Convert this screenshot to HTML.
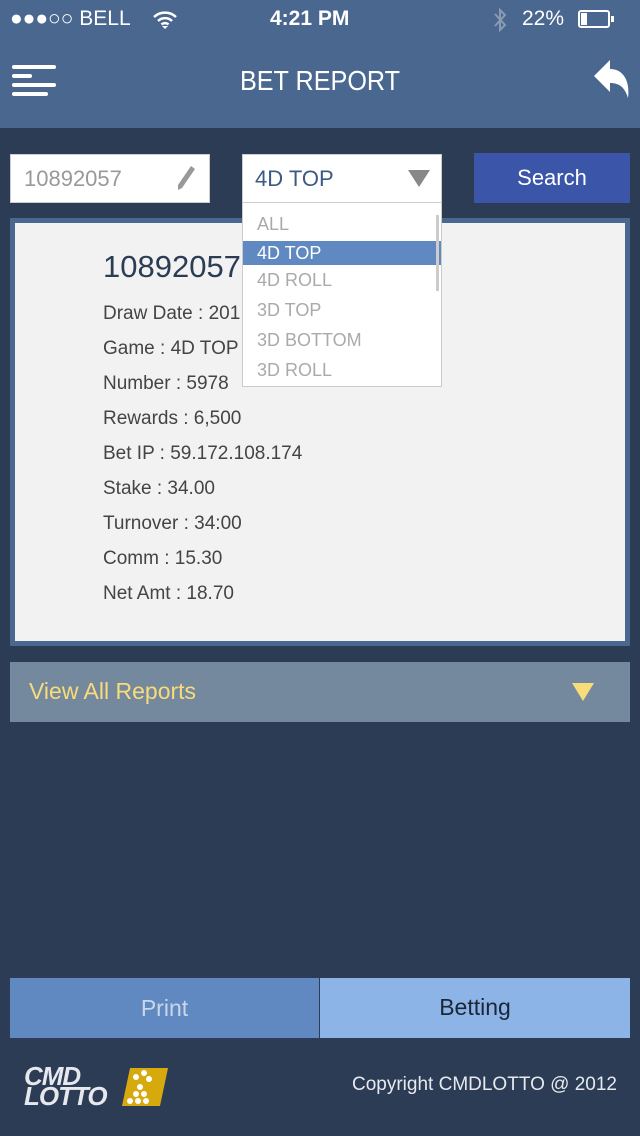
<!DOCTYPE html>
<html><head><meta charset="utf-8"><style>
*{margin:0;padding:0;box-sizing:border-box}
body{width:640px;height:1136px;background:#2b3c54;font-family:"Liberation Sans",sans-serif;position:relative;overflow:hidden}
.a{position:absolute}
#hdr{left:0;top:0;width:640px;height:128px;background:#4a6790}
.t{color:#fff;white-space:nowrap}
.card .l{position:absolute;left:88px;font-size:19px;color:#444;}
.dd div{height:30px;line-height:30px;padding-left:14px;font-size:18px;color:#aaa}
</style></head><body>
<div id="hdr" class="a"></div>
<div class="a t" style="left:10px;top:7px;font-size:21px">●●●○○ BELL</div>
<svg class="a" style="left:152px;top:9px" width="26" height="22" viewBox="0 0 26 22"><path d="M2 8 A16 16 0 0 1 24 8 M6 12 A10 10 0 0 1 20 12 M9.5 15.5 A5 5 0 0 1 16.5 15.5" stroke="#fff" stroke-width="2.5" fill="none"/><path d="M10 17 L13 20 L16 17 Z" fill="#fff"/></svg>
<div class="a t" style="left:270px;top:7px;font-size:21px;font-weight:bold">4:21 PM</div>
<svg class="a" style="left:492px;top:6px" width="16" height="28" viewBox="0 0 16 28"><path d="M3 8 L13 19 L8 24 L8 4 L13 9 L3 20" stroke="#8a9bb3" stroke-width="2" fill="none"/></svg>
<div class="a t" style="left:522px;top:7px;font-size:21px">22%</div>
<div class="a" style="left:578px;top:10px;width:32px;height:18px;border:2px solid #fff;border-radius:3px"><div style="width:6px;height:12px;margin:1px;background:#fff"></div></div>
<div class="a" style="left:611px;top:16px;width:3px;height:6px;background:#fff"></div>
<div class="a" style="left:12px;top:65px;width:44px;height:4px;background:#fff;border-radius:2px"></div>
<div class="a" style="left:12px;top:74px;width:20px;height:4px;background:#fff;border-radius:2px"></div>
<div class="a" style="left:12px;top:83px;width:44px;height:4px;background:#fff;border-radius:2px"></div>
<div class="a" style="left:12px;top:92px;width:36px;height:4px;background:#fff;border-radius:2px"></div>
<div class="a t" style="left:0;width:640px;text-align:center;top:65px;font-size:28px;transform:scaleX(0.9)">BET REPORT</div>
<svg class="a" style="left:592px;top:58px" width="40" height="42" viewBox="0 0 40 42"><path d="M2 18 L18 2 L18 11 C32 11 38 24 36 40 C33 30 28 25 18 25 L18 34 Z" fill="#fff"/></svg>

<div class="a" style="left:10px;top:154px;width:200px;height:49px;background:#fff;border:1px solid #ccc"></div>
<div class="a" style="left:24px;top:166px;font-size:22px;color:#999">10892057</div>
<svg class="a" style="left:174px;top:164px" width="24" height="28" viewBox="0 0 24 28"><path d="M17 2 L21 5 L8 24 L4 26 L4 21 Z" fill="#999"/></svg>
<div class="a" style="left:242px;top:154px;width:200px;height:49px;background:#fff;border:1px solid #ccc"></div>
<div class="a" style="left:255px;top:166px;font-size:22px;color:#3d5a85">4D TOP</div>
<div class="a" style="left:408px;top:170px;width:0;height:0;border-left:11px solid transparent;border-right:11px solid transparent;border-top:17px solid #888"></div>
<div class="a t" style="left:474px;top:153px;width:156px;height:50px;background:#3b55a8;text-align:center;line-height:50px;font-size:22px">Search</div>

<div class="a card" style="left:10px;top:218px;width:620px;height:428px;background:#f2f2f2;border:5px solid #4a6790">
<div class="l" style="top:26px;font-size:31px;color:#2b3c54">10892057</div>
<div class="l" style="top:80px">Draw Date : 201</div>
<div class="l" style="top:115px">Game : 4D TOP</div>
<div class="l" style="top:150px">Number : 5978</div>
<div class="l" style="top:185px">Rewards : 6,500</div>
<div class="l" style="top:220px">Bet IP : 59.172.108.174</div>
<div class="l" style="top:255px">Stake : 34.00</div>
<div class="l" style="top:290px">Turnover : 34:00</div>
<div class="l" style="top:325px">Comm : 15.30</div>
<div class="l" style="top:360px">Net Amt : 18.70</div>
</div>

<div class="a dd" style="left:242px;top:202px;width:200px;height:185px;background:#fff;border:1px solid #ccc;padding-top:6px">
<div style="height:32px;line-height:30px">ALL</div><div style="background:#5f89c0;color:#fff;height:24px;line-height:24px">4D TOP</div><div>4D ROLL</div><div>3D TOP</div><div>3D BOTTOM</div><div>3D ROLL</div>
<span style="position:absolute;right:2px;top:12px;width:3px;height:76px;background:#ccc"></span>
</div>

<div class="a" style="left:10px;top:662px;width:620px;height:60px;background:#74899e"></div>
<div class="a" style="left:29px;top:678px;font-size:23px;color:#f8dc7a">View All Reports</div>
<div class="a" style="left:572px;top:683px;width:0;height:0;border-left:11px solid transparent;border-right:11px solid transparent;border-top:18px solid #f8dc7a"></div>

<div class="a" style="left:10px;top:978px;width:309px;height:60px;background:#5f89c0;color:#c9d7ea;text-align:center;line-height:60px;font-size:23px">Print</div>
<div class="a" style="left:320px;top:978px;width:310px;height:60px;background:#8cb4e6;color:#1d2636;text-align:center;line-height:58px;font-size:23px">Betting</div>

<div class="a" style="left:24px;top:1066px;font-size:26px;font-weight:bold;font-style:italic;color:#e6e8ee;line-height:20px;letter-spacing:-1px">CMD<br>LOTTO</div>
<div class="a" style="left:126px;top:1068px;width:38px;height:38px;background:#d6a90c;transform:skewX(-12deg)"></div>
<svg class="a" style="left:118px;top:1068px" width="50" height="40" viewBox="0 0 50 40"><g fill="#fff"><circle cx="18" cy="9" r="3"/><circle cx="26" cy="5" r="3"/><circle cx="31" cy="11" r="3"/><circle cx="22" cy="19" r="3"/><circle cx="18" cy="26" r="3"/><circle cx="26" cy="26" r="3"/><circle cx="12" cy="33" r="3"/><circle cx="20" cy="33" r="3"/><circle cx="28" cy="33" r="3"/></g></svg>
<div class="a" style="left:352px;top:1074px;font-size:19px;color:#e6e9ef">Copyright CMDLOTTO @ 2012</div>
</body></html>
